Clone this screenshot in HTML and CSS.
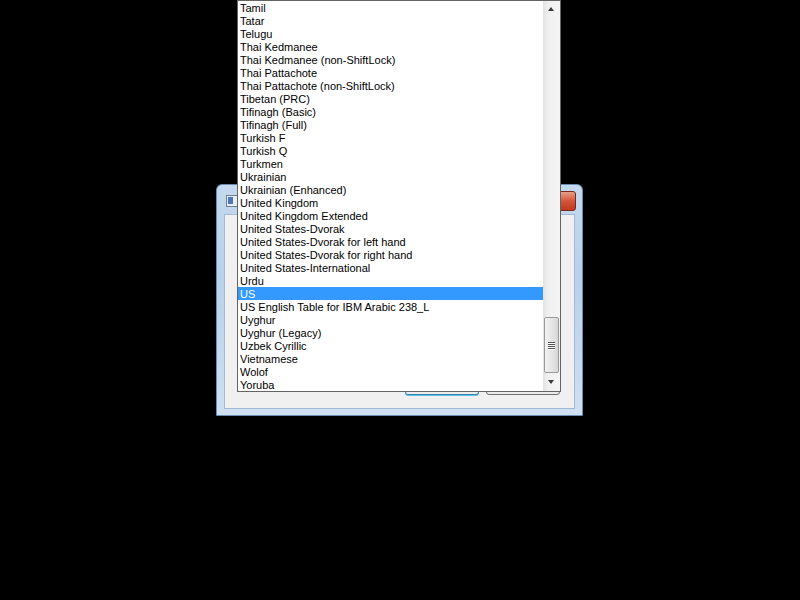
FILE: index.html
```html
<!DOCTYPE html>
<html>
  <head>
    <meta charset="UTF-8" />
    <title>Keyboard layout</title>
    <link rel="stylesheet" href="styles.css">
  </head>
  <body>
    <div class="dialog">
      <div class="titlebar">
        <div class="app-icon"><span class="app-icon-bar"></span></div>
        <div class="close-btn"></div>
      </div>
      <div class="client">
        <div class="spacer"></div>
        <div class="buttons">
          <div class="btn btn-default"></div>
          <div class="btn"></div>
        </div>
      </div>
    </div>

    <div class="dropdown">
      <ul class="options">
        <li>Tamil</li>
        <li>Tatar</li>
        <li>Telugu</li>
        <li>Thai Kedmanee</li>
        <li>Thai Kedmanee (non-ShiftLock)</li>
        <li>Thai Pattachote</li>
        <li>Thai Pattachote (non-ShiftLock)</li>
        <li>Tibetan (PRC)</li>
        <li>Tifinagh (Basic)</li>
        <li>Tifinagh (Full)</li>
        <li>Turkish F</li>
        <li>Turkish Q</li>
        <li>Turkmen</li>
        <li>Ukrainian</li>
        <li>Ukrainian (Enhanced)</li>
        <li>United Kingdom</li>
        <li>United Kingdom Extended</li>
        <li>United States-Dvorak</li>
        <li>United States-Dvorak for left hand</li>
        <li>United States-Dvorak for right hand</li>
        <li>United States-International</li>
        <li>Urdu</li>
        <li class="selected">US</li>
        <li>US English Table for IBM Arabic 238_L</li>
        <li>Uyghur</li>
        <li>Uyghur (Legacy)</li>
        <li>Uzbek Cyrillic</li>
        <li>Vietnamese</li>
        <li>Wolof</li>
        <li>Yoruba</li>
      </ul>
      <div class="scrollbar">
        <div class="arrow arrow-up"></div>
        <div class="track">
          <div class="thumb">
            <span class="grip"></span>
            <span class="grip"></span>
            <span class="grip"></span>
            <span class="grip"></span>
          </div>
        </div>
        <div class="arrow arrow-down"></div>
      </div>
    </div>
  </body>
</html>
```

FILE: styles.css
```css
body {
  background-color: #000;
  margin: 0;
  padding: 0;
  width: 800px;
  height: 600px;
  overflow: hidden;
  font-family: Tahoma, "Liberation Sans", Arial, sans-serif;
}

/* window behind the open list */
.dialog {
  position: absolute;
  left: 216px;
  top: 184px;
  width: 367px;
  height: 232px;
  box-sizing: border-box;
  background: linear-gradient(to bottom, #c4d9ee, #b9d1ea 40%, #cfe0f1);
  border: 1px solid #6b8bb0;
  border-radius: 6px 6px 0 0;
  padding: 0 7px 6px 7px;
  display: flex;
  flex-direction: column;
}

.titlebar {
  height: 29px;
  display: flex;
  align-items: center;
  justify-content: space-between;
}

.app-icon {
  width: 12px;
  height: 10px;
  margin-left: 2px;
  margin-top: 2px;
  background: #e8eef6;
  border: 1px solid #6a7f99;
  position: relative;
}

.app-icon-bar {
  position: absolute;
  left: 1px;
  top: 1px;
  width: 5px;
  height: 7px;
  background: #4a78b8;
}

.close-btn {
  width: 17px;
  height: 18px;
  margin-right: -1px;
  margin-top: 3px;
  border: 1px solid #7b2a1a;
  border-radius: 3px;
  background: linear-gradient(to bottom, #e8a08a, #d4553a 50%, #c03a1e);
}

.client {
  flex: 1;
  background: #f0f0f0;
  border: 1px solid #a3b9d3;
  display: flex;
  flex-direction: column;
}

.spacer {
  flex: 1;
}

.buttons {
  display: flex;
  justify-content: flex-end;
  gap: 7px;
  padding: 0 14px 13px 0;
}

.btn {
  width: 74px;
  height: 22px;
  box-sizing: border-box;
  border: 1px solid #707070;
  border-radius: 3px;
  background: #ececec;
}

.btn-default {
  border-color: #3c7fb1;
  box-shadow: 0 1px 0 #5ec3e8;
}

/* open dropdown list */
.dropdown {
  position: absolute;
  left: 237px;
  top: 0;
  width: 324px;
  height: 392px;
  box-sizing: border-box;
  border: 1px solid #646464;
  background: #fff;
  display: flex;
}

.options {
  list-style: none;
  margin: 0;
  padding: 0;
  flex: 1;
}

.options li {
  height: 13px;
  line-height: 14px;
  padding-left: 2px;
  font-size: 11px;
  color: #000;
  white-space: nowrap;
}

.options li.selected {
  background: #3399ff;
  color: #fff;
}

.scrollbar {
  width: 17px;
  background: linear-gradient(to right, #e3e3e3, #f0f0f0 30%, #f4f4f4);
  display: flex;
  flex-direction: column;
}

.arrow {
  height: 17px;
  position: relative;
}

.arrow::after {
  content: "";
  position: absolute;
  left: 5px;
  width: 0;
  height: 0;
  border-left: 3px solid transparent;
  border-right: 3px solid transparent;
}

.arrow-up::after {
  top: 6px;
  border-bottom: 4px solid #3a3a3a;
}

.arrow-down::after {
  top: 6px;
  border-top: 4px solid #3a3a3a;
}

.track {
  flex: 1;
  display: flex;
  flex-direction: column;
  justify-content: flex-end;
  padding-bottom: 1px;
}

.thumb {
  height: 56px;
  margin: 0 1px;
  box-sizing: border-box;
  border: 1px solid #9a9a9a;
  border-radius: 2px;
  background: linear-gradient(to right, #f2f2f2, #e6e6e6 50%, #d6d6d6);
  display: flex;
  flex-direction: column;
  justify-content: center;
  align-items: center;
  gap: 1px;
}

.grip {
  width: 7px;
  height: 1px;
  background: #555;
  box-shadow: 0 1px 0 #fff;
}
```
